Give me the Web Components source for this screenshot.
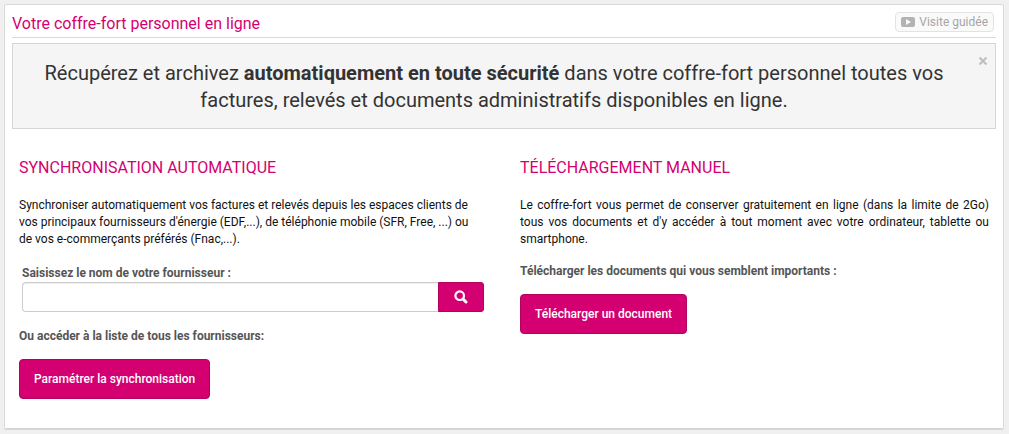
<!DOCTYPE html>
<html lang="fr">
<head>
<meta charset="utf-8">
<meta name="viewport" content="width=device-width, initial-scale=1">
<title>Votre coffre-fort personnel en ligne</title>
<style>
body {
  margin: 0;
  padding: 4px 5px 4px 4px;
  background: #f0f0f0;
  color: #111;
  font: 12px/17px Roboto, "Liberation Sans", sans-serif;
  --accent: #d40072;
  --accent-dark: #b4005f;
}
</style>
</head>
<body>
<vault-card>
  <span slot="title">Votre coffre-fort personnel en ligne</span>
  <tour-button slot="action">Visite guidée</tour-button>
  <info-banner>Récupérez et archivez <strong>automatiquement en toute sécurité</strong> dans votre coffre-fort personnel toutes vos factures, relevés et documents administratifs disponibles en ligne.</info-banner>
  <option-columns>
    <option-panel>
      <span slot="heading">SYNCHRONISATION AUTOMATIQUE</span>
      <span slot="text">Synchroniser automatiquement vos factures et relevés depuis les espaces clients de vos principaux fournisseurs d'énergie (EDF,...), de téléphonie mobile (SFR, Free, ...) ou de vos e-commerçants préférés (Fnac,...).</span>
      <provider-search>Saisissez le nom de votre fournisseur :</provider-search>
      <action-block>
        <span slot="caption">Ou accéder à la liste de tous les fournisseurs:</span>
        Paramétrer la synchronisation
      </action-block>
    </option-panel>
    <option-panel justified>
      <span slot="heading">TÉLÉCHARGEMENT MANUEL</span>
      <span slot="text">Le coffre-fort vous permet de conserver gratuitement en ligne (dans la limite de 2Go) tous vos documents et d'y accéder à tout moment avec votre ordinateur, tablette ou smartphone.</span>
      <action-block>
        <span slot="caption">Télécharger les documents qui vous semblent importants :</span>
        Télécharger un document
      </action-block>
    </option-panel>
  </option-columns>
</vault-card>
<script>
const define = (name, html) => {
  const template = document.createElement('template');
  template.innerHTML = html;
  customElements.define(name, class extends HTMLElement {
    constructor() {
      super();
      this.attachShadow({ mode: 'open' }).append(template.content.cloneNode(true));
    }
  });
};

define('vault-card', `
<style>
:host { display: block; background: #fff; border: 1px solid #d9d9d9; border-bottom: 2px solid #d6d6d6; border-radius: 2px; padding: 0 7px 29px; }
header { display: flex; align-items: center; justify-content: space-between; box-sizing: border-box; min-height: 33px; margin-bottom: 5px; padding-top: 2px; border-bottom: 1px solid #d9d9d9; }
h1 { margin: 0; padding-top: 3px; font-size: 16px; line-height: 22px; font-weight: 400; color: var(--accent); }
</style>
<header><h1><slot name="title"></slot></h1><slot name="action"></slot></header>
<slot></slot>`);

define('tour-button', `
<style>
:host { display: block; margin-right: 2px; }
button { display: flex; align-items: center; gap: 4px; height: 20px; box-sizing: border-box; padding: 0 5px; border: 1px solid #e3e3e3; border-radius: 4px; background: #fafafa; color: #a6a6a6; font: inherit; cursor: pointer; }
svg { display: block; }
span { line-height: 18px; }
</style>
<button type="button"><svg width="14" height="10" viewBox="0 0 14 10" aria-hidden="true"><path fill="#b3b3b3" fill-rule="evenodd" d="M2 0H12Q14 0 14 2V8Q14 10 12 10H2Q0 10 0 8V2Q0 0 2 0ZM5 2V8L10 5Z"/></svg><span><slot></slot></span></button>`);

define('info-banner', `
<style>
:host { display: block; position: relative; border: 1px solid #d6d6d6; background: #f5f5f5; padding: 16px 35px 14px 15px; text-align: center; color: #333; font-size: 20px; line-height: 27px; }
p { margin: 0; }
button { position: absolute; top: 12px; right: 7px; padding: 0; width: 10px; height: 10px; border: 0; background: none; cursor: pointer; }
svg { display: block; }
</style>
<p><slot></slot></p>
<button type="button" aria-label="Fermer"><svg width="10" height="10" viewBox="0 0 10 10"><path d="M1.5 1.5L8.5 8.5M8.5 1.5L1.5 8.5" stroke="#bebebe" stroke-width="2"/></svg></button>`);

define('option-columns', `
<style>
:host { display: grid; grid-template-columns: 1fr 1fr; column-gap: 32px; padding: 28px 7px 0; }
</style>
<slot></slot>`);

define('option-panel', `
<style>
:host { display: block; min-width: 0; }
h2 { margin: 0 0 18px; font-size: 16px; line-height: 22px; font-weight: 400; color: var(--accent); }
p { margin: 0; padding-right: 8px; }
:host([justified]) p { padding-right: 0; text-align: justify; }
</style>
<h2><slot name="heading"></slot></h2>
<p><slot name="text"></slot></p>
<slot></slot>`);

define('provider-search', `
<style>
:host { display: block; padding: 17px 4px 1px 3px; }
label { display: block; font-weight: 700; color: #555; }
form { display: flex; height: 30px; }
input { flex: 1; min-width: 0; box-sizing: border-box; margin: 0; padding: 4px 6px; border: 1px solid #ccc; border-right: 0; border-radius: 4px 0 0 4px; background: #fff; box-shadow: inset 0 1px 1px #0001; font: inherit; }
button { display: flex; align-items: center; justify-content: center; width: 46px; box-sizing: border-box; padding: 0; border: 1px solid var(--accent-dark); border-radius: 0 3px 3px 0; background: var(--accent); cursor: pointer; }
svg { display: block; }
</style>
<label for="provider"><slot></slot></label>
<form><input id="provider" type="text"><button type="button" aria-label="Rechercher"><svg width="14" height="14" viewBox="0 0 14 14" aria-hidden="true"><circle cx="5.7" cy="5.7" r="4.3" fill="none" stroke="#fff" stroke-width="2.2"/><path d="M9 9L12 12" stroke="#fff" stroke-width="3" stroke-linecap="round"/></svg></button></form>`);

define('action-block', `
<style>
:host { display: block; padding-top: 15px; }
p { margin: 0 0 14px; font-weight: 700; color: #555; }
button { display: block; height: 40px; box-sizing: border-box; padding: 1px 14px 0; border: 1px solid var(--accent-dark); border-radius: 4px; background: var(--accent); color: #fff; font: inherit; font-weight: 500; cursor: pointer; }
</style>
<p><slot name="caption"></slot></p>
<button type="button"><slot></slot></button>`);
</script>
</body>
</html>
